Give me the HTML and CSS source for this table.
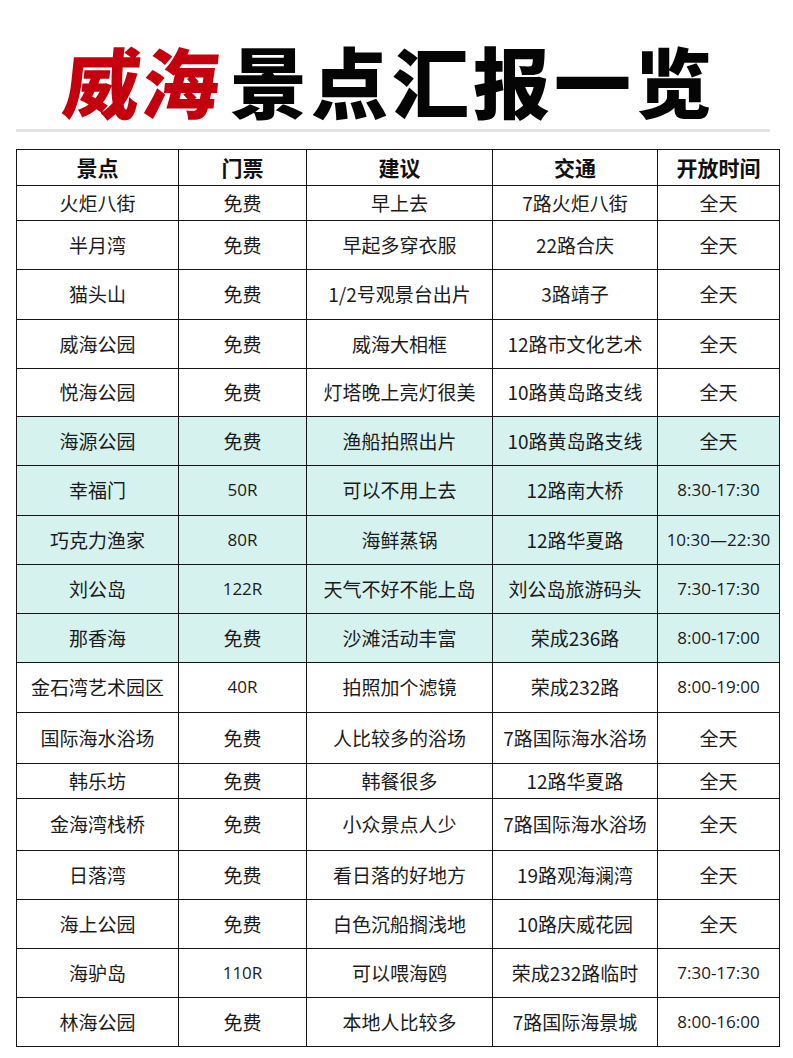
FILE: index.html
```html
<!DOCTYPE html>
<html lang="zh">
<head>
<meta charset="utf-8">
<title>威海景点汇报一览</title>
<link rel="stylesheet" href="styles.css">
</head>
<body>
<header class="title"><span class="red">威海</span><span class="dark">景点汇报一览</span></header>
<div class="rule"></div>
<table class="sheet">
  <colgroup>
    <col class="c1"><col class="c2"><col class="c3"><col class="c4"><col class="c5">
  </colgroup>
  <thead>
    <tr class="h36"><th>景点</th><th>门票</th><th>建议</th><th>交通</th><th>开放时间</th></tr>
  </thead>
  <tbody>
    <tr class="h35"><td>火炬八街</td><td>免费</td><td>早上去</td><td>7路火炬八街</td><td>全天</td></tr>
    <tr class="h49"><td>半月湾</td><td>免费</td><td>早起多穿衣服</td><td>22路合庆</td><td>全天</td></tr>
    <tr class="h50"><td>猫头山</td><td>免费</td><td>1/2号观景台出片</td><td>3路靖子</td><td>全天</td></tr>
    <tr class="h49"><td>威海公园</td><td>免费</td><td>威海大相框</td><td>12路市文化艺术</td><td>全天</td></tr>
    <tr class="h48"><td>悦海公园</td><td>免费</td><td>灯塔晚上亮灯很美</td><td>10路黄岛路支线</td><td>全天</td></tr>
    <tr class="h49 teal"><td>海源公园</td><td>免费</td><td>渔船拍照出片</td><td>10路黄岛路支线</td><td>全天</td></tr>
    <tr class="h50 teal"><td>幸福门</td><td class="num">50R</td><td>可以不用上去</td><td>12路南大桥</td><td class="num">8:30-17:30</td></tr>
    <tr class="h49 teal"><td>巧克力渔家</td><td class="num">80R</td><td>海鲜蒸锅</td><td>12路华夏路</td><td class="num">10:30—22:30</td></tr>
    <tr class="h49 teal"><td>刘公岛</td><td class="num">122R</td><td>天气不好不能上岛</td><td>刘公岛旅游码头</td><td class="num">7:30-17:30</td></tr>
    <tr class="h49 teal"><td>那香海</td><td>免费</td><td>沙滩活动丰富</td><td>荣成236路</td><td class="num">8:00-17:00</td></tr>
    <tr class="h50"><td>金石湾艺术园区</td><td class="num">40R</td><td>拍照加个滤镜</td><td>荣成232路</td><td class="num">8:00-19:00</td></tr>
    <tr class="h51"><td>国际海水浴场</td><td>免费</td><td>人比较多的浴场</td><td>7路国际海水浴场</td><td>全天</td></tr>
    <tr class="h35"><td>韩乐坊</td><td>免费</td><td>韩餐很多</td><td>12路华夏路</td><td>全天</td></tr>
    <tr class="h52"><td>金海湾栈桥</td><td>免费</td><td>小众景点人少</td><td>7路国际海水浴场</td><td>全天</td></tr>
    <tr class="h49"><td>日落湾</td><td>免费</td><td>看日落的好地方</td><td>19路观海澜湾</td><td>全天</td></tr>
    <tr class="h49"><td>海上公园</td><td>免费</td><td>白色沉船搁浅地</td><td>10路庆威花园</td><td>全天</td></tr>
    <tr class="h49"><td>海驴岛</td><td class="num">110R</td><td>可以喂海鸥</td><td>荣成232路临时</td><td class="num">7:30-17:30</td></tr>
    <tr class="h49"><td>林海公园</td><td>免费</td><td>本地人比较多</td><td>7路国际海景城</td><td class="num">8:00-16:00</td></tr>
  </tbody>
</table>
</body>
</html>
```

FILE: styles.css
```css
html, body {
  margin: 0;
  padding: 0;
  background: #ffffff;
}

body {
  font-family: "Noto Sans CJK SC", "Noto Sans", sans-serif;
  color: #1b1b1b;
}

.title {
  margin: 41px 0 0 64px;
  height: 78px;
  font-size: 77px;
  line-height: 78px;
  font-weight: 900;
  letter-spacing: 4px;
  white-space: nowrap;
}

.title .red {
  color: #c4000f;
  display: inline-block;
  transform: skewX(-6deg);
  letter-spacing: 2px;
  margin-right: 8px;
}

.title .dark {
  color: #050505;
}

.rule {
  margin: 10px 23px 0 16px;
  height: 3px;
  background: #e3e3e3;
}

.sheet {
  margin: 17px 0 0 16px;
  width: 763px;
  border-collapse: collapse;
  table-layout: fixed;
  font-size: 19px;
}

.c1 { width: 162px; }
.c2 { width: 128px; }
.c3 { width: 186px; }
.c4 { width: 165px; }
.c5 { width: 122px; }

.sheet th,
.sheet td {
  border: 1px solid #151515;
  text-align: center;
  vertical-align: middle;
  padding: 0;
  line-height: 1.2;
  white-space: nowrap;
}

.sheet th {
  font-weight: 700;
  font-size: 21px;
  color: #111;
}

.sheet td.num {
  font-family: "Open Sans", "Noto Sans", sans-serif;
  font-size: 17px;
}

.teal td {
  background: #d6f2ef;
}

.h35 { height: 35px; }
.h36 { height: 36px; }
.h48 { height: 48px; }
.h49 { height: 49px; }
.h50 { height: 50px; }
.h51 { height: 51px; }
.h52 { height: 52px; }
```
